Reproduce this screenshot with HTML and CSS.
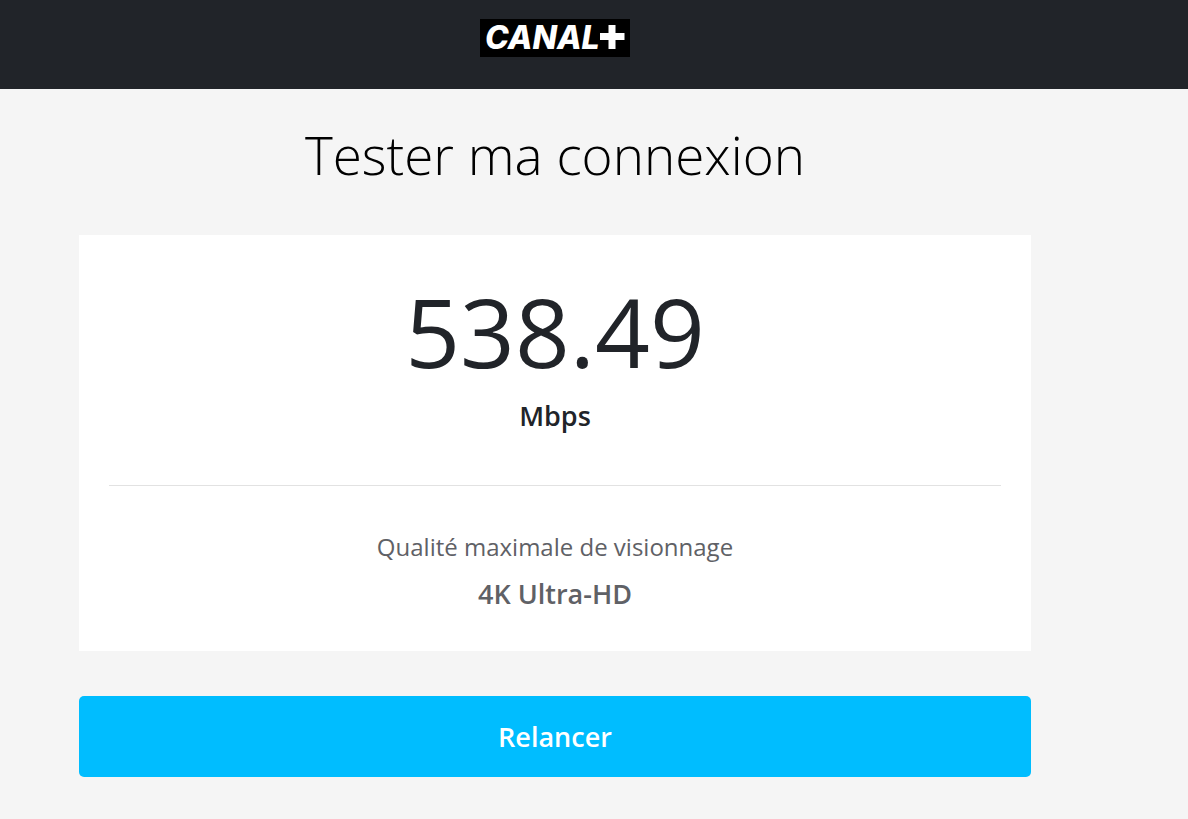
FILE: index.html
```html
<!DOCTYPE html>
<html lang="fr">
<head>
<meta charset="utf-8">
<meta name="viewport" content="width=device-width, initial-scale=1">
<title>Tester ma connexion</title>
<link rel="stylesheet" href="styles.css">
</head>
<body>
<header class="header">
  <svg class="logo" viewBox="0 0 150 38" role="img" aria-label="CANAL+">
    <rect width="150" height="38" fill="#000"/>
    <text class="logo-text" x="5" y="30">CANAL</text>
    <path d="M120 14h8.500V6h7v8h9v7h-9v9h-7v-9H120z" fill="#fff"/>
  </svg>
</header>
<main class="main">
  <h1 class="title">Tester ma connexion</h1>
  <section class="card">
    <div class="result">
      <p class="speed">538.49</p>
      <p class="strong unit">Mbps</p>
    </div>
    <div class="quality">
      <p class="label">Qualité maximale de visionnage</p>
      <p class="strong">4K Ultra-HD</p>
    </div>
  </section>
  <button class="restart" type="button">Relancer</button>
</main>
</body>
</html>
```
FILE: styles.css
```css
* {
  box-sizing: border-box;
}

body {
  margin: 0;
  background: #f5f5f5;
  color: #212429;
  font-family: "Open Sans", sans-serif;
}

h1,
p {
  margin: 0;
}

.header {
  display: flex;
  justify-content: center;
  padding: 19px 78px 32px 0;
  background: #212429;
}

.logo {
  display: block;
  width: 150px;
  overflow: visible;
}

.logo-text {
  fill: #fff;
  font-family: Inter, sans-serif;
  font-size: 32px;
  font-style: italic;
  font-weight: 800;
}

.main {
  padding: 30px 157px 42px 79px;
  text-align: center;
}

.title {
  margin-bottom: 44px;
  color: #000;
  font-size: 53px;
  font-weight: 300;
  line-height: 72px;
}

.card {
  margin-bottom: 45px;
  padding: 0 30px;
  background: #fff;
}

.result {
  padding: 30px 0 50px;
  border-bottom: 1px solid #e2e2e2;
}

.speed {
  font-size: 96px;
  line-height: 132px;
}

.strong {
  font-size: 27px;
  font-weight: 600;
  line-height: 38px;
}

.quality {
  padding: 42px 0 38px;
  color: #5f6166;
}

.label {
  margin-bottom: 9px;
  font-size: 24px;
  line-height: 38px;
}

.restart {
  display: block;
  width: 100%;
  padding: 20px;
  border: 0;
  border-radius: 5px;
  background: #00bdff;
  color: #fff;
  font: 600 27px/41px "Open Sans", sans-serif;
}
```
